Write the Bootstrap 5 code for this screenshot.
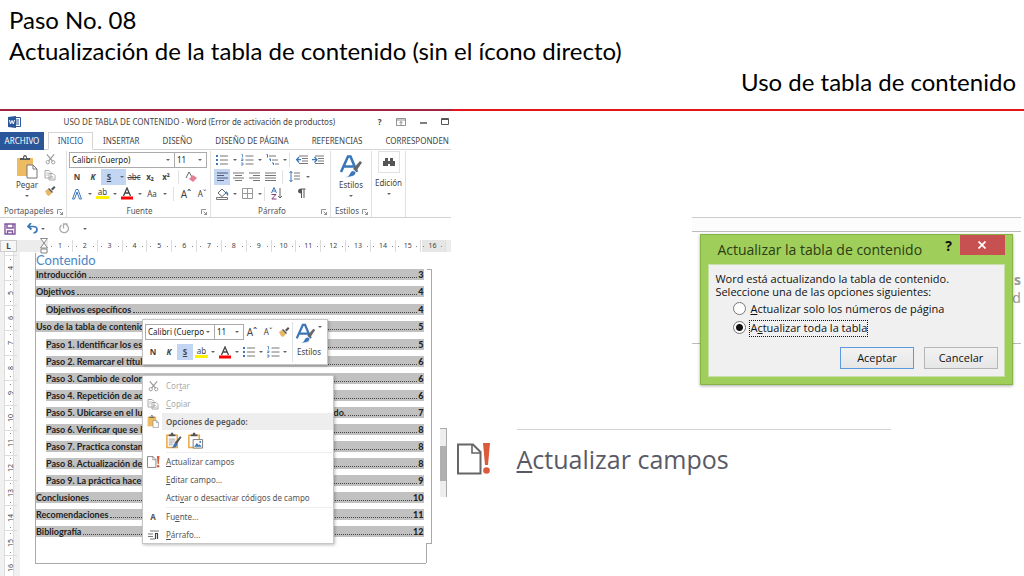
<!DOCTYPE html>
<html lang="es">
<head>
<meta charset="utf-8">
<meta name="viewport" content="width=device-width, initial-scale=1">
<title>Uso de tabla de contenido</title>
<link href="https://cdn.jsdelivr.net/npm/bootstrap@5.3.0/dist/css/bootstrap.min.css" rel="stylesheet">
<style>
  :root { --ui: "Noto Sans", "Open Sans", sans-serif; --doc: Lato, "Open Sans", sans-serif; --word-blue: #2b579a; }
  body { font-family: var(--ui); color: #444; background: #fff; overflow-x: hidden; }
  button { font-family: inherit; color: inherit; background: none; border: 0; padding: 0; }
  svg { display: block; flex: none; }
  .slide-head { font: 24px/31px var(--doc); color: #000; padding: 4px 8px 12px 9px; }
  .slide-rule { height: 2px; background: linear-gradient(90deg, #a3243e 44%, #e3141c 44%); }
  .word-pane { width: 44%; font-size: 8px; line-height: 12px; overflow: hidden; }
  .aside-pane { width: 56%; padding-top: 106px; }

  .title-row { height: 21px; padding: 0 2px 0 8px; }
  .win-btns { gap: 14px; }
  .tab-row { height: 18px; border-bottom: 1px solid #d5d5d5; white-space: nowrap; }
  .tab-row a { color: #444; text-decoration: none; line-height: 17px; height: 18px; }
  .tab-row .file-tab { background: var(--word-blue); color: #fff; width: 44px; text-align: center; }
  .tab-row .on-tab { color: var(--word-blue); width: 45px; text-align: center; border: 1px solid #d5d5d5; border-bottom-color: #fff; margin: 0 10px 0 4px; line-height: 15px; }
  .tab-list { gap: 23px; }

  .ribbon { height: 68px; border-bottom: 1px solid #d2d2d2; padding-top: 1px; }
  .rgroup { border-right: 1px solid #e1e1e1; display: flex; flex-direction: column; flex: none; height: 66px; }
  .rgroup .rname { margin-top: auto; display: flex; justify-content: center; position: relative; line-height: 12px; color: #555; }
  .rname svg { position: absolute; right: 3px; top: 4px; }
  .rrow { display: flex; align-items: center; height: 17px; }
  .ic { width: 16px; height: 16px; display: flex; align-items: center; justify-content: center; flex: none; line-height: 14px; }
  .caret { width: 9px; height: 16px; display: flex; align-items: center; justify-content: center; flex: none; }
  .caret::after, .combo::after { content: ""; border: 2px solid transparent; border-top-color: #666; border-bottom: 0; }
  .combo { border: 1px solid #ababab; height: 16px; display: flex; align-items: center; padding-right: 4px; background: #fff; }
  .combo input { border: 0; padding: 0 0 0 2px; width: 100%; min-width: 0; font: 8px/12px var(--ui); color: #222; outline: 0; background: none; }
  .combo + .combo { border-left: 0; }
  .grow-font { font-size: 10px; }
  .picked { background: #c2d5f2; }
  .hl { height: 11px; width: 13px; line-height: 8px; border-bottom: 3px solid #fff200; margin: 0 1px 0 2px; }
  .vbar { width: 1px; height: 14px; background: #e1e1e1; flex: none; }
  .big-label { line-height: 12px; }
  .big-label .caret { height: 10px; }

  .quick-row { height: 21px; padding-left: 4px; gap: 11px; }
  .hruler { height: 12px; background: #ececec; margin-top: 1px; }
  .hruler .corner { width: 17px; height: 12px; background: #f6f6f6; border: 1px solid #ccc; text-align: center; font: bold 8px/10px var(--ui); margin-right: 31px; }
  .hruler .cells { background: linear-gradient(90deg, #fff 94%, #e6e6e6 94%); flex: 1; display: flex; margin-right: 5px; }
  .hruler .cells span, .vruler span { flex: 1; display: flex; align-items: center; justify-content: space-around; font-size: 7px; line-height: 12px; color: #444; border-right: 1px solid #ddd; }
  .hruler .cells span::before, .hruler .cells span::after, .vruler span::before, .vruler span::after { content: ""; width: 1px; height: 1px; background: #888; }
  .doc-area { flex: 1; }
  .vruler { width: 20px; background: #f1f1f1; flex: none; position: relative; overflow: hidden; }
  .vruler ol { position: absolute; inset: 0 auto auto 4px; width: 10px; background: #fff; border: solid #ddd; border-width: 0 1px; list-style: none; margin: 0; padding: 3px 0 0; }
  .vruler li { height: 25px; writing-mode: vertical-rl; transform: rotate(180deg); font-size: 7px; line-height: 8px; display: flex; }
  .vruler span { border-right: 0; border-bottom: 1px solid #ddd; }

  .sheet { margin: 1px 25px 12px 15px; border: solid #a9a9a9; border-width: 0 0 1px 1px; flex: 1; height: 311px; position: relative; }
  .sheet::after { content: ""; position: absolute; right: -6px; top: 16px; bottom: 19px; width: 5px; border: 1px solid #a9a9a9; border-left: 0; }
  .sheet::before { content: ""; position: absolute; right: -1px; bottom: 0; height: 20px; border-right: 1px solid #a9a9a9; }
  .indent-mark { position: absolute; left: 4px; top: -15px; }
  .toc-title { font: 13px/14px var(--doc); color: #4a86c5; margin: 0 0 2px; }
  .toc { list-style: none; margin: 0; padding: 0; font: bold 9px/11px var(--doc); color: #222; display: flex; flex-direction: column; gap: 6px; }
  .sheet > .toc { padding-right: 2px; }
  .toc .toc { padding-left: 10px; margin-top: 7px; }
  .toc a { display: flex; background: #c1c1c1; color: inherit; text-decoration: none; height: 11px; white-space: nowrap; }
  .toc a::before { content: ""; order: 1; flex: 1; border-bottom: 1px dotted #444; margin: 0 1px 2px 2px; }
  .toc a b { order: 2; }
  .toc .resumes { display: flex; justify-content: space-between; width: 300px; }

  .floating { position: absolute; background: #fff; border: 1px solid #c6c6c6; box-shadow: 1px 1px 3px #0004; }
  .mini-bar { left: 106px; top: 66px; width: 186px; padding: 2px; }
  .mini-bar .rrow { height: 20px; }
  .mini-bar .caret { width: 8px; }
  .ctx { left: 106px; top: 122px; width: 192px; padding-top: 1px; height: 169px; color: #555; }
  .ctx button { display: flex; align-items: center; height: 18px; width: 100%; text-align: left; white-space: nowrap; }
  .ctx .ic { width: 20px; margin-right: 3px; }
  .ctx hr { margin: 0 1px 0 23px; border-color: #bbb; }
  .ctx .off { color: #aaa; }
  .ctx .paste-head { background: linear-gradient(90deg, #fff 19px, #eee 19px); font-weight: 600; height: 17px; }
  .ctx .paste-icons { height: 22px; padding-left: 22px; gap: 5px; }

  .backdrop-page { width: 57.3%; margin-left: auto; margin-right: 3px; border-top: 1px solid #ccc; height: 127px; position: relative; flex: none; border-bottom: 1px solid #bbb; }
  .backdrop-page .strip { height: 14px; background: #fcfcfc; border-bottom: 1px solid #bbb; }
  .peek { font-size: 14px; line-height: 18px; color: #999; text-align: right; padding-top: 39px; }
  .dlg { position: absolute; left: 8px; right: 8px; top: 16px; background: #a0ce5a; border: 1px solid #86b344; padding: 0 7px 7px; box-shadow: 0 1px 3px #0005; color: #111; }
  .dlg-title { font: 14px/29px "Open Sans", var(--ui); height: 29px; padding-left: 9px; color: #2b3d14; white-space: nowrap; }
  .dlg-close { background: #c75050; color: #fff; width: 45px; height: 20px; }
  .dlg-body { background: #f0f0f0; border: 1px solid #c8dfa8; font: 11px/13px "Open Sans", var(--ui); padding: 7px 6px 7px; white-space: nowrap; }
  .dlg-opts { padding: 4px 0 0 18px; }
  .dlg-acts { gap: 10px; margin-top: 11px; }
  .dlg-body label { line-height: 14px; height: 15px; }
  .dlg-body input { appearance: none; width: 13px; height: 13px; border: 1px solid #777; border-radius: 50%; background: #fff; margin: 0 4px 0 0; }
  .dlg-body input:checked { background: radial-gradient(#111 0 3px, #fff 4px); }
  .focus-label { outline: 1px dotted #111; }
  .dlg-body button { flex: 0 0 74px; height: 22px; border: 1px solid #b5b5b5; background: linear-gradient(#f2f2f2, #e6e6e6); line-height: 18px; }
  .dlg-body button.go { border-color: #5a9bdc; }
  .closeup { margin: 84px 0 0 -11px; height: 69px; position: relative; display: flex; }
  .scroll-bit { width: 7px; border: 1px solid #aaa; border-width: 1px 1px 0 0; background: linear-gradient(#eee 17px, #b0b0b0 17px 52px, #eee 52px); }
  .closeup > svg { margin: 15px 0 0 10px; }
  .closeup button { border-top: 1px solid #d2d2d2; margin: 1px 0 0 26px; width: 374px; font: 25px/50px "Open Sans", var(--ui); color: #5a5a66; text-align: left; padding-bottom: 10px; }
</style>
</head>
<body class="min-vh-100 d-flex flex-column">

<svg width="0" height="0" class="position-absolute" aria-hidden="true">
  <symbol id="i-list" viewBox="0 0 13 12"><path d="M4 2h8M4 6h8M4 10h8" stroke="#777"/><path d="M0 2h2M0 6h2M0 10h2" stroke="#3a76b8" stroke-width="2"/></symbol>
  <symbol id="i-num" viewBox="0 0 13 12"><path d="M4.500 2h8M4.500 6h8M4.500 10h8" stroke="#777"/><path d="M.5 .5h1v3M0 5h2v1.500H0M0 9h2v2H0" stroke="#3a76b8" fill="none" stroke-width=".8"/></symbol>
  <symbol id="i-multi" viewBox="0 0 13 12"><path d="M3 2h7M6 6h6M9 10h4" stroke="#777"/><path d="M.5 .5h1v3M3 5h1.500v2M6 9h1.500v2" stroke="#3a76b8" fill="none"/></symbol>
  <symbol id="i-scissors" viewBox="0 0 12 12"><path d="M2 1l6 7M10 1L4 8" stroke="#999" stroke-width="1.300"/><circle cx="3" cy="9.500" r="1.800" fill="none" stroke="#999"/><circle cx="9" cy="9.500" r="1.800" fill="none" stroke="#999"/></symbol>
  <symbol id="i-copy" viewBox="0 0 12 12"><path d="M1 1.500h4l2 2V9H1zM5 4.500h4l2 2V11H5z" fill="#fff" stroke="#aaa"/><path d="M2 4h3M2 6h2M6 7.500h3M6 9.200h4" stroke="#aaa" stroke-width=".7"/></symbol>
  <symbol id="i-brush" viewBox="0 0 12 12"><path d="M1 6l3-2 4 4-3 3-2-1z" fill="#e8b765"/><path d="M4 4l1-1 4 4-1 1zM7 4l3-3 1.500 1.500-3 3z" fill="#555"/></symbol>
  <symbol id="i-paste" viewBox="0 0 22 24"><path d="M1 3h16v18H1z" fill="#edbb62"/><path d="M4 5V3h3q0-3 2-3t2 3h3v2z" fill="#555"/><circle cx="9" cy="2.500" r="1" fill="#fff"/><path d="M11 10h6l4 4v9H11z" fill="#fff" stroke="#777"/><path d="M17 10v4h4" fill="none" stroke="#777"/></symbol>
  <symbol id="i-keep" viewBox="0 0 18 18"><path d="M2 3h11v13H2z" fill="#fff" stroke="#e8a848" stroke-width="1.600"/><path d="M4 4V2h2q0-2 1.500-2T9 2h2v2z" fill="#555"/><path d="M4 7h7M4 9h7M4 11h5M4 13h4" stroke="#888" stroke-width=".8"/><path d="M10 11l6-7 1.500 1-5.500 8z" fill="#555"/><path d="M6 16q3 0 3-3 2-3 4 0-1 4-7 3z" fill="#3a76b8"/></symbol>
  <symbol id="i-pic" viewBox="0 0 18 18"><path d="M2 3h11v13H2z" fill="#fff" stroke="#e8a848" stroke-width="1.600"/><path d="M4 4V2h2q0-2 1.500-2T9 2h2v2z" fill="#555"/><path d="M6.500 7.500h10v9h-10z" fill="#fff" stroke="#777"/><path d="M7.500 15l3-4 2 2.500 1-1 2 2.500z" fill="#3a76b8"/><circle cx="14" cy="10" r="1" fill="#3a76b8"/></symbol>
  <symbol id="i-field" viewBox="0 0 34 32"><path d="M1 1.500h15l7.500 7.500v21.500H1z" fill="#fff" stroke="#666" stroke-width="2"/><path d="M15 2v8h8" fill="none" stroke="#666" stroke-width="1.600"/><path d="M26 0h7l-2 22h-3z" fill="#da5a3c"/><circle cx="29.500" cy="27.500" r="3.300" fill="#da5a3c"/></symbol>
  <symbol id="i-launch" viewBox="0 0 6 6"><path d="M.5 5V.5H5M2.500 2.500l3 3M5.500 3v2.500H3" fill="none" stroke="#777" stroke-width=".8"/></symbol>
  <symbol id="i-style" viewBox="0 0 24 24"><path d="M2 17L9 1.500h2.500L18 17M5 11.500h10" fill="none" stroke="#3a76b8" stroke-width="2.600"/><path d="M14 14l7-8 2 1.500-6 9z" fill="#666"/><path d="M5 22q5 0 6-4 2-4 6-1 0 6-12 5z" fill="#3a76b8" stroke="#fff" stroke-width=".7"/></symbol>
  <symbol id="i-color" viewBox="0 0 12 13"><path d="M2.500 9L6 1l3.500 8M3.800 6h4.400" fill="none" stroke="#444" stroke-width="1.300"/><path d="M0 9.500h12v3H0z" fill="#f00"/></symbol>
</svg>

<header class="slide-head">
  <div>Paso No. 08</div>
  <div>Actualización de la tabla de contenido (sin el ícono directo)</div>
  <div class="text-end">Uso de tabla de contenido</div>
</header>
<div class="slide-rule"></div>

<main class="d-flex flex-fill">
  <section class="word-pane d-flex flex-column">
    <div class="title-row d-flex align-items-center">
      <svg width="13" height="12" viewBox="0 0 13 12"><path d="M6 1.500h6.500v9H6z" fill="#fff" stroke="#2b579a"/><path d="M8 4h3M8 6h3M8 8h3" stroke="#2b579a"/><path d="M0 1l8-1v12l-8-1z" fill="#2b579a"/><path d="M1.500 4l1 4L4 4.500 5.300 8l1.200-4" fill="none" stroke="#fff"/></svg>
      <span class="flex-fill text-center text-nowrap">USO DE TABLA DE CONTENIDO - Word (Error de activación de productos)</span>
      <div class="win-btns d-flex align-items-center">
        <button class="fw-bold" aria-label="Ayuda">?</button>
        <button aria-label="Opciones de cinta"><svg width="10" height="8" viewBox="0 0 10 8"><path d="M.5 .5h9v7h-9zM.5 2h9M5 7V3.500M3.500 5L5 3.500 6.500 5" fill="none" stroke="#777" stroke-width=".8"/></svg></button>
        <button aria-label="Minimizar"><svg width="7" height="8"><path d="M0 5h7" stroke="#555" stroke-width="1.500"/></svg></button>
        <button aria-label="Maximizar"><svg width="8" height="8"><path d="M.5 .5h7v6h-7zM0 1.500h8" fill="none" stroke="#555"/></svg></button>
      </div>
    </div>
    <nav class="tab-row d-flex">
      <a href="#" class="file-tab">ARCHIVO</a><a href="#" class="on-tab">INICIO</a>
      <div class="tab-list d-flex"><a href="#">INSERTAR</a><a href="#">DISEÑO</a><a href="#">DISEÑO DE PÁGINA</a><a href="#">REFERENCIAS</a><a href="#">CORRESPONDEN</a></div>
    </nav>
    <div class="ribbon d-flex">
      <div class="rgroup" style="width:67px">
        <div class="d-flex">
          <button class="d-flex flex-column align-items-center ps-3 pt-1 big-label"><svg width="22" height="24"><use href="#i-paste"/></svg>Pegar<span class="caret"></span></button>
          <div class="ms-1">
            <button class="ic"><svg width="11" height="12"><use href="#i-scissors"/></svg></button>
            <button class="ic"><svg width="12" height="12"><use href="#i-copy"/></svg></button>
            <button class="ic"><svg width="12" height="12"><use href="#i-brush"/></svg></button>
          </div>
        </div>
        <div class="rname justify-content-start ps-1">Portapapeles<svg width="6" height="6"><use href="#i-launch"/></svg></div>
      </div>
      <div class="rgroup" style="width:144px;padding-left:2px">
        <div class="rrow"><label class="combo" style="width:106px"><input value="Calibri (Cuerpo)" aria-label="Fuente"></label><label class="combo" style="width:32px"><input value="11" aria-label="Tamaño"></label></div>
        <div class="rrow"><button class="ic fw-bold">N</button><button class="ic fw-bold fst-italic">K</button><button class="picked d-flex"><span class="ic fw-bold text-decoration-underline">S</span><span class="caret"></span></button><button class="ic text-decoration-line-through">abc</button><button class="ic fw-bold">x₂</button><button class="ic fw-bold">x²</button><span class="vbar mx-1"></span><button class="ic"><svg width="12" height="12"><path d="M1 7L4 1l3 5" fill="none" stroke="#666"/><path d="M4 8l4-4 4 3-4 4z" fill="#e57f93"/></svg></button></div>
        <div class="rrow"><button class="ic"><svg width="12" height="12"><path d="M1.500 11L5 1.500h2L10.500 11H8.500L6 4 3.500 11z" fill="#fff" stroke="#3a76b8"/></svg></button><span class="caret"></span><button class="ic hl">ab</button><span class="caret"></span><button class="ic"><svg width="12" height="13"><use href="#i-color"/></svg></button><span class="caret"></span><button class="ic">Aa</button><span class="caret"></span><span class="vbar mx-1"></span><button class="ic grow-font">Aˆ</button><button class="ic">Aˇ</button></div>
        <div class="rname">Fuente<svg width="6" height="6"><use href="#i-launch"/></svg></div>
      </div>
      <div class="rgroup" style="width:120px;padding-left:3px">
        <div class="rrow"><button class="ic"><svg width="13" height="12"><use href="#i-list"/></svg></button><span class="caret"></span><button class="ic"><svg width="13" height="12"><use href="#i-num"/></svg></button><span class="caret"></span><button class="ic"><svg width="13" height="12"><use href="#i-multi"/></svg></button><span class="caret"></span><span class="vbar me-1"></span>
          <button class="ic"><svg width="12" height="10"><path d="M3 1h9M6 3.500h6M6 6h6M3 8.500h9" stroke="#777"/><path d="M0 4.700h5M3 2L.7 4.700 3 7.500" fill="none" stroke="#3a76b8" stroke-width="1.300"/></svg></button>
          <button class="ic"><svg width="12" height="10"><path d="M3 1h9M6 3.500h6M6 6h6M3 8.500h9" stroke="#777"/><path d="M0 4.700h5M2.500 2L5 4.700 2.500 7.500" fill="none" stroke="#3a76b8" stroke-width="1.300"/></svg></button></div>
        <div class="rrow">
          <button class="ic picked"><svg width="11" height="10"><path d="M0 1h11M0 3.500h7M0 6h11M0 8.500h7" stroke="#557"/></svg></button>
          <button class="ic"><svg width="11" height="10"><path d="M0 1h11M2 3.500h7M0 6h11M2 8.500h7" stroke="#777"/></svg></button>
          <button class="ic"><svg width="11" height="10"><path d="M0 1h11M4 3.500h7M0 6h11M4 8.500h7" stroke="#777"/></svg></button>
          <button class="ic"><svg width="11" height="10"><path d="M0 1h11M0 3.500h11M0 6h11M0 8.500h11" stroke="#777"/></svg></button>
          <span class="vbar mx-1"></span>
          <button class="ic"><svg width="12" height="12"><path d="M5 2h6M5 5h6M5 8h6" stroke="#777"/><path d="M2 0v11M.5 2L2 .5 3.500 2M.5 9L2 10.500 3.500 9" fill="none" stroke="#3a76b8"/></svg></button><span class="caret"></span></div>
        <div class="rrow">
          <button class="ic"><svg width="13" height="13"><path d="M2 6l4-4 4 4-4 3.500z" fill="#fff" stroke="#666"/><path d="M10 4q3 2 2 5-2-1-2-5z" fill="#3a76b8"/><path d="M.5 10.500h11v2H.5z" fill="#fff" stroke="#777"/></svg></button><span class="caret"></span>
          <button class="ic"><svg width="11" height="11"><path d="M.5 .5h10v10H.5zM5.500 0v11M0 5.500h11" fill="none" stroke="#999"/></svg></button><span class="caret"></span><span class="vbar me-1"></span>
          <button class="ic"><svg width="12" height="13"><path d="M.5 6L3 .5 5.500 6M1.500 4h3" fill="none" stroke="#3a76b8"/><path d="M.5 7.500h4.500L.8 12H5.500" fill="none" stroke="#80397b"/><path d="M9 1v10M7 9l2 2 2-2" fill="none" stroke="#666"/></svg></button>
          <button class="ic ms-2" aria-label="Mostrar marcas"><svg width="9" height="11"><path d="M4.500 10V1H8.500M7 1v9" fill="none" stroke="#555"/><path d="M4.500 .5v5Q1 5.500 1 3t3.500-2.500z" fill="#555"/></svg></button></div>
        <div class="rname">Párrafo<svg width="6" height="6"><use href="#i-launch"/></svg></div>
      </div>
      <div class="rgroup" style="width:41px">
        <button class="d-flex flex-column align-items-center pt-1 big-label"><svg width="24" height="24"><use href="#i-style"/></svg>Estilos<span class="caret"></span></button>
        <div class="rname justify-content-start ps-1">Estilos<svg width="6" height="6"><use href="#i-launch"/></svg></div>
      </div>
      <div class="rgroup" style="width:34px">
        <button class="d-flex flex-column align-items-center big-label"><span class="border mb-1 px-1 py-1"><svg width="12" height="12"><path d="M2 2h3v3H2zM7 2h3v3H7zM0 5h5v5H0zM7 5h5v5H7zM5 5h2v3H5z" fill="#555"/></svg></span>Edición<span class="caret"></span></button>
      </div>
    </div>
    <div class="quick-row d-flex align-items-center">
      <button aria-label="Guardar"><svg width="12" height="12"><path d="M1 1h10v10H1zM3 1v4h6V1M3.500 11V8h5v3" fill="none" stroke="#80569f" stroke-width="1.400"/></svg></button>
      <button class="d-flex align-items-center" aria-label="Deshacer"><svg width="11" height="11"><path d="M4 0L1 3.500 4.500 6.500M1 3.500h5q4 0 4 3T6.500 10" fill="none" stroke="#3a76b8" stroke-width="1.700"/></svg><span class="caret"></span></button>
      <button aria-label="Repetir"><svg width="11" height="11"><path d="M8 1.500A4.300 4.300 0 1 1 3.500 2M5.500 5.500V1h4" fill="none" stroke="#aaa" stroke-width="1.300"/></svg></button>
      <button class="caret" aria-label="Personalizar"></button>
    </div>
    <div class="hruler d-flex">
      <div class="corner">L</div>
      <div class="cells"><span>1</span><span>2</span><span>3</span><span>4</span><span>5</span><span>6</span><span>7</span><span>8</span><span>9</span><span>10</span><span>11</span><span>12</span><span>13</span><span>14</span><span>15</span><span>16</span></div>
    </div>
    <div class="doc-area d-flex">
      <div class="vruler"><ol><li><span>4</span></li><li><span>5</span></li><li><span>6</span></li><li><span>7</span></li><li><span>8</span></li><li><span>9</span></li><li><span>10</span></li><li><span>11</span></li><li><span>12</span></li><li><span>13</span></li><li><span>14</span></li><li><span>15</span></li><li><span>16</span></li></ol></div>
      <article class="sheet">
        <svg class="indent-mark" width="9" height="17"><path d="M.5 .5h7L4 5zM4 5l3.500 5h-7zM1 11h6v4H1z" fill="#fff" stroke="#888"/></svg>
        <h1 class="toc-title">Contenido</h1>
        <ul class="toc">
          <li><a href="#"><span>Introducción</span><b>3</b></a></li>
          <li><a href="#"><span>Objetivos</span><b>4</b></a>
            <ul class="toc"><li><a href="#"><span>Objetivos específicos</span><b>4</b></a></li></ul></li>
          <li><a href="#"><span>Uso de la tabla de contenid</span><b>5</b></a>
            <ul class="toc">
              <li><a href="#"><span>Paso 1. Identificar los es</span><b>5</b></a></li>
              <li><a href="#"><span>Paso 2. Remarcar el títul</span><b>6</b></a></li>
              <li><a href="#"><span>Paso 3. Cambio de color</span><b>6</b></a></li>
              <li><a href="#"><span>Paso 4. Repetición de ac</span><b>6</b></a></li>
              <li><a href="#"><span class="resumes"><span>Paso 5. Ubicarse en el lu</span><span>do.</span></span><b>7</b></a></li>
              <li><a href="#"><span>Paso 6. Verificar que se l</span><b>8</b></a></li>
              <li><a href="#"><span>Paso 7. Practica constan</span><b>8</b></a></li>
              <li><a href="#"><span>Paso 8. Actualización de</span><b>8</b></a></li>
              <li><a href="#"><span>Paso 9. La práctica hace</span><b>9</b></a></li>
            </ul></li>
          <li><a href="#"><span>Conclusiones</span><b>10</b></a></li>
          <li><a href="#"><span>Recomendaciones</span><b>11</b></a></li>
          <li><a href="#"><span>Bibliografía</span><b>12</b></a></li>
        </ul>

        <div class="floating mini-bar d-flex justify-content-between">
          <div>
            <div class="rrow"><label class="combo" style="width:70px"><input value="Calibri (Cuerpo" aria-label="Fuente"></label><label class="combo" style="width:29px"><input value="11" aria-label="Tamaño"></label><button class="ic grow-font">Aˆ</button><button class="ic">Aˇ</button><button class="ic"><svg width="12" height="12"><use href="#i-brush"/></svg></button></div>
            <div class="rrow"><button class="ic fw-bold">N</button><button class="ic fw-bold fst-italic">K</button><button class="ic fw-bold picked text-decoration-underline">S</button><button class="ic hl">ab</button><span class="caret"></span><button class="ic"><svg width="12" height="13"><use href="#i-color"/></svg></button><span class="caret"></span><button class="ic"><svg width="13" height="12"><use href="#i-list"/></svg></button><span class="caret"></span><button class="ic"><svg width="13" height="12"><use href="#i-num"/></svg></button><span class="caret"></span></div>
          </div>
          <button class="border-start d-flex flex-column align-items-center big-label flex-fill"><span class="d-flex"><svg width="21" height="24"><use href="#i-style"/></svg><span class="caret"></span></span>Estilos</button>
        </div>

        <div class="floating ctx">
          <button class="off"><span class="ic"><svg width="11" height="12"><use href="#i-scissors"/></svg></span><span>Cor<u>t</u>ar</span></button>
          <button class="off"><span class="ic"><svg width="12" height="12"><use href="#i-copy"/></svg></span><span><u>C</u>opiar</span></button>
          <div class="paste-head d-flex align-items-center"><span class="ic"><svg width="12" height="13"><use href="#i-paste"/></svg></span>Opciones de pegado:</div>
          <div class="paste-icons d-flex align-items-center"><svg width="17" height="18"><use href="#i-keep"/></svg><svg width="17" height="18"><use href="#i-pic"/></svg></div>
          <hr>
          <button><span class="ic"><svg width="13" height="12"><use href="#i-field"/></svg></span><span><u>A</u>ctualizar campos</span></button>
          <button><span class="ic"></span><span><u>E</u>ditar campo...</span></button>
          <button><span class="ic"></span><span>Acti<u>v</u>ar o desactivar códigos de campo</span></button>
          <hr>
          <button><span class="ic fw-bold">A</span><span>Fu<u>e</u>nte...</span></button>
          <button><span class="ic"><svg width="11" height="10"><path d="M2 1h9M0 4h5M0 6.500h5M2 9h5" stroke="#777"/><path d="M7.500 9V3.500M9.500 9V3.500M10 3.500H7" stroke="#444" stroke-width="1.200"/></svg></span><span><u>P</u>árrafo...</span></button>
        </div>
      </article>
    </div>
  </section>

  <section class="aside-pane d-flex flex-column">
    <div class="backdrop-page">
      <div class="strip"></div>
      <div class="peek"><b>s</b><br>d</div>
      <form class="dlg">
        <div class="d-flex justify-content-between">
          <div class="dlg-title">Actualizar la tabla de contenido</div>
          <div class="d-flex align-items-start gap-2"><button type="button" class="fw-bold small" aria-label="Ayuda">?</button><button type="button" class="dlg-close d-flex align-items-center justify-content-center" aria-label="Cerrar"><svg width="8" height="8"><path d="M.5 .5l7 7M7.500 .5l-7 7" stroke="#fff" stroke-width="1.700"/></svg></button></div>
        </div>
        <div class="dlg-body">
          <div>Word está actualizando la tabla de contenido.</div>
          <div>Seleccione una de las opciones siguientes:</div>
          <div class="dlg-opts d-flex flex-column gap-1">
            <div class="d-flex"><input type="radio" name="upd" id="r1"><label for="r1"><u>A</u>ctualizar solo los números de página</label></div>
            <div class="d-flex"><input type="radio" name="upd" id="r2" checked><label for="r2" class="focus-label">A<u>c</u>tualizar toda la tabla</label></div>
          </div>
          <div class="dlg-acts d-flex justify-content-end"><button type="button" class="go">Aceptar</button><button type="button">Cancelar</button></div>
        </div>
      </form>
    </div>
    <div class="closeup">
      <div class="scroll-bit"></div>
      <svg width="34" height="32"><use href="#i-field"/></svg>
      <button><u>A</u>ctualizar campos</button>
    </div>
  </section>
</main>
<script src="https://cdn.jsdelivr.net/npm/bootstrap@5.3.0/dist/js/bootstrap.bundle.min.js"></script>
</body>
</html>
